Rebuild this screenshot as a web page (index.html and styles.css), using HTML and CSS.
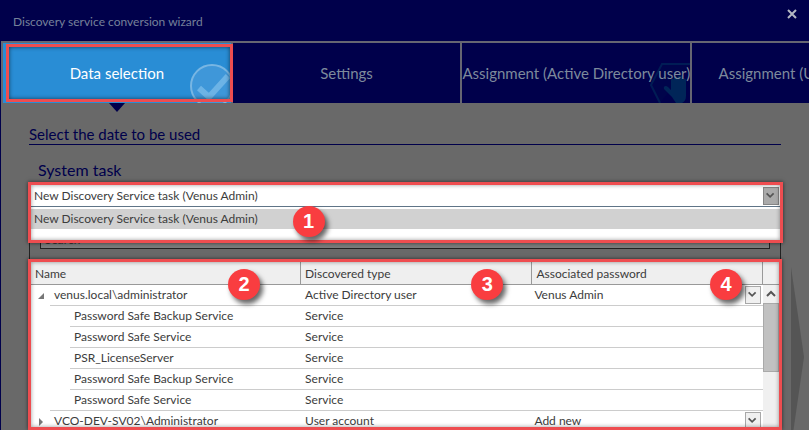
FILE: index.html
```html
<!DOCTYPE html>
<html lang="en">

<head>
    <meta charset="UTF-8">
    <meta name="viewport" content="width=device-width, initial-scale=1.0">
    <title>Discovery service conversion wizard</title>
    <link rel="stylesheet" href="styles.css">
</head>

<body>
    <div class="wizard">
        <header class="titlebar">
            <h1>Discovery service conversion wizard</h1>
            <button type="button" class="close" aria-label="Close">
                <svg width="12" height="12" viewBox="0 0 12 12"><path d="M2 2l8 8M10 2l-8 8" /></svg>
            </button>
        </header>

        <nav class="tabs">
            <button type="button" class="tab active">
                <svg class="tab-icon" width="42" height="40" viewBox="0 0 42 40">
                    <circle cx="23" cy="23" r="21" fill="#3f97d9" stroke="#78b6e3" stroke-width="2" />
                    <path d="M10 25l10 9 19-21" fill="none" stroke="#6cb3e6" stroke-width="6" />
                </svg>
                Data selection
            </button>
            <button type="button" class="tab">Settings</button>
            <button type="button" class="tab">
                <svg class="tab-icon" width="42" height="42" viewBox="0 0 42 42">
                    <path d="M42 3H14L3 24l9 18" fill="#00044b" stroke="#001c55" stroke-width="2" />
                    <path d="M24 36l-8-8c-1-3 2-4 4-2l3 3V19c0-2 3-2 3 0v-2c0-2 4-2 4 0v-1c0-2 4-2 4 0v3c0-2 4-2 4 0v16c0 4-2 6-4 7h-6z" fill="#002558" />
                </svg>
                Assignment (Active Directory user)
            </button>
            <button type="button" class="tab">Assignment (User account)</button>
        </nav>

        <main class="content">
            <h2>Select the date to be used</h2>
            <h3 id="taskLabel">System task</h3>

            <div class="group">
                <div class="picker">
                    <div class="select-box">
                        <select aria-labelledby="taskLabel">
                            <option>New Discovery Service task (Venus Admin)</option>
                        </select>
                        <svg class="arrow" width="16" height="18" viewBox="0 0 16 18"><path d="M3 6l4 4 4-4" /></svg>
                    </div>
                    <ul class="menu">
                        <li>New Discovery Service task (Venus Admin)</li>
                    </ul>
                    <span class="badge badge-task">1</span>
                </div>

                <input type="text" class="search" placeholder="Search" aria-label="Search">

                <div class="grid-panel">
                    <table>
                        <thead>
                            <tr>
                                <th class="col-name">Name<span class="badge badge-name">2</span></th>
                                <th class="col-type">Discovered type<span class="badge badge-type">3</span></th>
                                <th>Associated password<span class="badge badge-password">4</span></th>
                            </tr>
                        </thead>
                        <tbody>
                            <tr>
                                <td class="name">
                                    <svg class="expander" width="8" height="8" viewBox="0 0 8 8"><path d="M7 1v6H1z" /></svg>
                                    <div class="parent">venus.local\administrator</div>
                                </td>
                                <td>Active Directory user</td>
                                <td class="password">
                                    <div class="select-box">
                                        <select aria-label="Associated password">
                                            <option>Venus Admin</option>
                                        </select>
                                        <svg class="arrow" width="16" height="18" viewBox="0 0 16 18"><path d="M3 6l4 4 4-4" /></svg>
                                    </div>
                                </td>
                            </tr>
                            <tr>
                                <td class="name"><div class="child">Password Safe Backup Service</div></td>
                                <td>Service</td>
                                <td></td>
                            </tr>
                            <tr>
                                <td class="name"><div class="child">Password Safe Service</div></td>
                                <td>Service</td>
                                <td></td>
                            </tr>
                            <tr>
                                <td class="name"><div class="child">PSR_LicenseServer</div></td>
                                <td>Service</td>
                                <td></td>
                            </tr>
                            <tr>
                                <td class="name"><div class="child">Password Safe Backup Service</div></td>
                                <td>Service</td>
                                <td></td>
                            </tr>
                            <tr>
                                <td class="name"><div class="child last">Password Safe Service</div></td>
                                <td>Service</td>
                                <td></td>
                            </tr>
                            <tr>
                                <td class="name">
                                    <svg class="expander" width="8" height="8" viewBox="0 0 8 8"><path d="M2 0l4 4-4 4z" /></svg>
                                    <div class="parent">VCO-DEV-SV02\Administrator</div>
                                </td>
                                <td>User account</td>
                                <td class="password">
                                    <div class="select-box">
                                        <select aria-label="Associated password">
                                            <option>Add new</option>
                                        </select>
                                        <svg class="arrow" width="16" height="18" viewBox="0 0 16 18"><path d="M3 6l4 4 4-4" /></svg>
                                    </div>
                                </td>
                            </tr>
                        </tbody>
                    </table>
                    <div class="scrollbar">
                        <div class="scroll-head"></div>
                        <button type="button" class="scroll-up" aria-label="Scroll up">
                            <svg width="14" height="16" viewBox="0 0 14 16"><path d="M3 11l4-4 4 4" /></svg>
                        </button>
                        <div class="thumb"></div>
                    </div>
                </div>
            </div>

            <svg class="next" width="14" height="180" viewBox="0 0 14 180"><path d="M0 0l13 90L0 180z" fill="#555" /></svg>
        </main>
    </div>
</body>

</html>
```
FILE: styles.css
```css
* {
    box-sizing: border-box;
}

body {
    margin: 0;
    font-family: Lato, "Open Sans", sans-serif;
    font-size: 12px;
    color: #3c3c3c;
    background-color: #696969;
}

button,
select,
input {
    font: inherit;
    color: inherit;
    margin: 0;
    padding: 0;
    border: none;
    border-radius: 0;
}

.wizard {
    display: flex;
    flex-direction: column;
    height: 100vh;
    overflow: hidden;
    border-left: 1px solid #00004b;
}

/* Title bar */
.titlebar {
    display: flex;
    justify-content: space-between;
    align-items: flex-start;
    flex: none;
    height: 41px;
    padding: 8px 11px 0 12px;
    background-color: #00004b;
    color: #76819a;
}

.titlebar h1 {
    margin: 0;
    padding-top: 4px;
    font-size: 12px;
    line-height: 20px;
    font-weight: 400;
}

.close {
    display: flex;
    background: none;
}

.close path {
    stroke: #b4b8c4;
    stroke-width: 2;
}

/* Step tabs */
.tabs {
    position: relative;
    z-index: 1;
    display: flex;
    flex: none;
    height: 62px;
    border-top: 2px solid #666672;
    border-left: 2px solid #666672;
    background-color: #00004b;
}

.tab {
    position: relative;
    z-index: 0;
    flex: 0 0 28.5%;
    min-width: 0;
    border-right: 2px solid #666672;
    background-color: #00004b;
    color: #7d8a9c;
    font-size: 15px;
    white-space: nowrap;
}

.tab.active {
    z-index: 1;
    background-color: #298dd5;
    color: #fff;
}

.tab.active::before {
    content: "";
    position: absolute;
    inset: 1px -2px 1px 3px;
    z-index: 1;
    border: 3px solid #ee4d50;
    box-shadow: inset 0 0 4px rgba(0, 0, 0, 0.6);
}

.tab.active::after {
    content: "";
    position: absolute;
    top: 100%;
    left: 50%;
    margin-left: -8px;
    border: 8px solid transparent;
    border-top: 9px solid #00004b;
    border-bottom: none;
}

.tab-icon {
    position: absolute;
    right: 0;
    bottom: 0;
    z-index: -1;
}

/* Content */
.content {
    position: relative;
    display: flex;
    flex-direction: column;
    flex: 1;
    min-height: 0;
    padding: 21px 28px 0 28px;
    background-color: #696969;
}

h2,
h3 {
    margin: 0;
    font-weight: 400;
    color: #00004b;
}

h2 {
    border-bottom: 1px solid #00004b;
    font-size: 15px;
    line-height: 20px;
}

h3 {
    padding: 14px 9px 3px;
    font-size: 16px;
    line-height: 21px;
}

.group {
    display: flex;
    flex-direction: column;
    flex: 1;
    min-height: 0;
    border: 1px solid #222;
    border-bottom: none;
}

.picker {
    position: relative;
    height: 21px;
}

.picker::after {
    content: "";
    position: absolute;
    inset: -2px -3px -38px -2px;
    border: 3px solid #ee4d50;
    box-shadow: 0 0 4px rgba(0, 0, 0, 0.6), inset 0 0 4px rgba(0, 0, 0, 0.4);
    pointer-events: none;
}

.select-box {
    position: relative;
}

.select-box select {
    display: block;
    width: 100%;
    height: 23px;
    padding-left: 4px;
    appearance: none;
    background-color: #fff;
}

.menu {
    position: absolute;
    top: 22px;
    left: 0;
    right: 0;
    height: 35px;
    margin: 0;
    padding: 2px 0 0;
    border-top: 1px solid #5f7487;
    background-color: #fff;
    list-style: none;
}

.menu li {
    height: 20px;
    padding-left: 4px;
    background-color: #d1d1d1;
    line-height: 20px;
}

.arrow {
    position: absolute;
    top: 1px;
    right: 2px;
    border: 1px solid #a8a8a8;
    background-color: #f0f0f0;
    pointer-events: none;
}

.arrow path,
.scroll-up path {
    fill: none;
    stroke: #555;
    stroke-width: 2;
}

.picker .arrow {
    top: 3px;
    right: 1px;
    border-color: #858585;
    background-color: #aaa;
}

.search {
    height: 20px;
    margin: 24px 10px 10px;
    padding: 0 4px;
    border: 1px solid #222;
    background-color: #7a7c7c;
}

.search::placeholder {
    color: #333;
    opacity: 1;
}

/* Grid */
.grid-panel {
    position: relative;
    display: flex;
    align-items: flex-start;
    flex: 1;
    min-height: 0;
    margin: 0 -2px;
    overflow: hidden;
    border: 3px solid #ee4d50;
    background-color: #fff;
    box-shadow: 0 0 4px rgba(0, 0, 0, 0.6);
}

/* soft edge just inside the frame */
.grid-panel::after {
    content: "";
    position: absolute;
    inset: 0;
    box-shadow: inset 0 0 4px rgba(0, 0, 0, 0.4);
    pointer-events: none;
}

table {
    flex: 1;
    width: 100%;
    table-layout: fixed;
    border-collapse: separate;
    border-spacing: 0;
}

th {
    position: relative;
    height: 23px;
    padding: 0 4px;
    border-right: 1px solid #999;
    border-bottom: 1px solid #999;
    background-color: #efefef;
    font-weight: 400;
    text-align: left;
}

.col-name {
    width: 36.9%;
}

.col-type {
    width: 31.6%;
}

td {
    height: 21px;
    padding: 0 4px;
    border-bottom: 1px solid #ccc;
    line-height: 20px;
    white-space: nowrap;
}

td.name {
    position: relative;
    padding: 0;
    border-bottom: none;
}

.parent,
.child {
    margin-left: 19px;
    padding-left: 4px;
    border-bottom: 1px solid #ccc;
}

.child {
    margin-left: 39px;
}

.child.last {
    margin-left: 19px;
    padding-left: 24px;
}

.expander {
    position: absolute;
    top: 7px;
    left: 6px;
    fill: #777;
}

td.password {
    padding: 0;
}

.password select {
    height: 20px;
    padding-left: 2px;
}

/* Scrollbar */
.scrollbar {
    display: flex;
    flex-direction: column;
    align-self: stretch;
    flex: none;
    width: 16px;
    background-color: #f0f0f0;
}

.scroll-head {
    flex: none;
    height: 23px;
    border-bottom: 1px solid #999;
}

.scroll-up {
    display: flex;
    justify-content: center;
    flex: none;
    height: 18px;
    background-color: #f0f0f0;
}

.thumb {
    height: 69px;
    border: 1px solid #a9a9a9;
    background-color: #c1c1c1;
}

/* Numbered markers */
.badge {
    position: absolute;
    z-index: 2;
    width: 32px;
    height: 31px;
    border-radius: 50%;
    background-color: #f93d40;
    box-shadow: 3px 4px 5px rgba(0, 0, 0, 0.6);
    color: #fff;
    font: bold 20px/31px "Liberation Sans", Arial, sans-serif;
    text-align: center;
}

.badge-task {
    top: 22px;
    left: 35%;
}

.badge-name {
    top: 7px;
    right: 40px;
}

.badge-type {
    top: 7px;
    right: 28px;
}

.badge-password {
    top: 7px;
    right: 20px;
}

.next {
    position: absolute;
    top: 164px;
    right: 4px;
}
```
